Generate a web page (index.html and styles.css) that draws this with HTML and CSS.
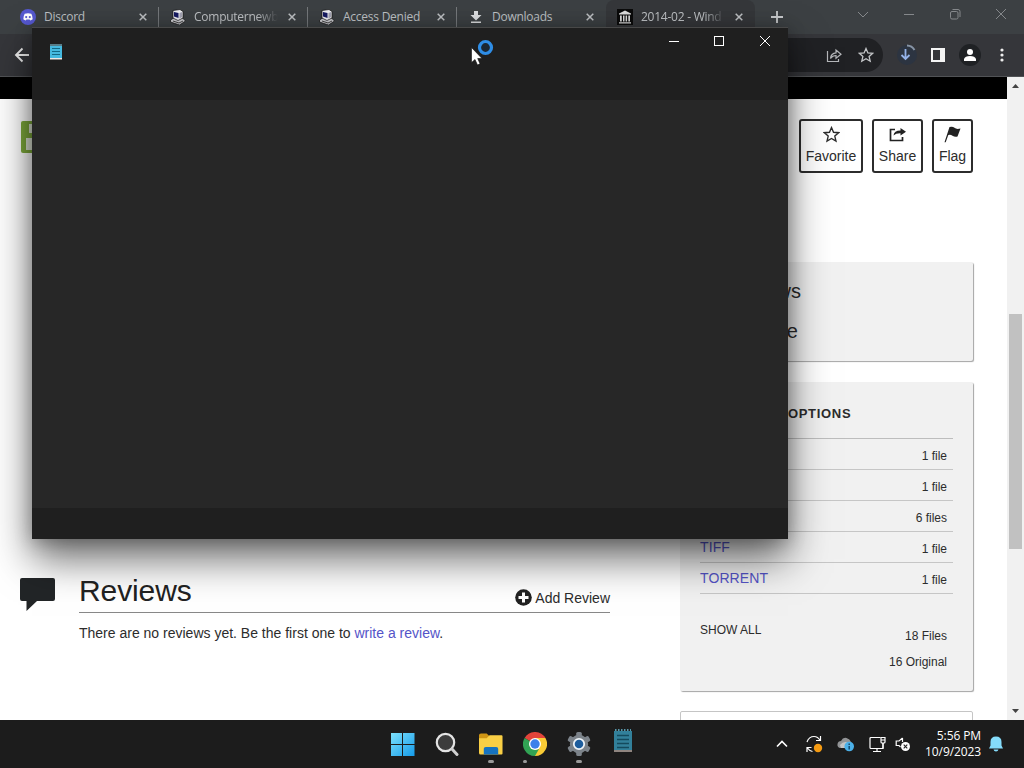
FILE: index.html
```html
<!DOCTYPE html>
<html lang="en">
<head>
    <meta charset="UTF-8">
    <meta name="viewport" content="width=device-width, initial-scale=1.0">
    <title>2014-02 - Windows</title>
    <link rel="stylesheet" href="styles.css">
</head>
<body>
    <!-- shared icons -->
    <svg width="0" height="0" class="defs">
        <symbol id="pc" viewBox="0 0 16 16">
            <path d="M.5 11l4-2.500 8 .5 3 3-6 4-9-3z" fill="#c9c9ce" stroke="#111" stroke-width=".7"/>
            <path d="M3 1.500L10 .5l3 2v6.500L8 11.500l-5-2.500z" fill="#eeeef2" stroke="#111" stroke-width=".7"/>
            <path d="M4 3l4.500 1v5L4 7.500z" fill="#171b62"/>
            <path d="M9.500 4l2.500-1v5l-2.500 1.500z" fill="#a4a4b4"/>
            <path d="M3 12l6 2 4-2" fill="none" stroke="#444" stroke-width="1"/>
        </symbol>
        <symbol id="x" viewBox="0 0 8 8"><path d="M.7.7l6.600 6.600M7.300.7L.7 7.300" stroke="currentColor" stroke-width="1.500"/></symbol>
        <symbol id="star" viewBox="0 0 16 16"><path d="M8 1.500l1.900 4.400 4.800.4-3.600 3.200 1.100 4.700L8 11.700l-4.200 2.500 1.100-4.700-3.600-3.200 4.800-.4z" fill="none" stroke="currentColor" stroke-width="1.300"/></symbol>
    </svg>

    <div class="tabs">
        <div class="tab">
            <svg class="favicon" viewBox="0 0 16 16"><circle cx="8" cy="8" r="8" fill="#5558cf"/><path d="M4.700 4.800Q8 3.700 11.300 4.800 12.800 7.500 12.700 10.300 11.500 11.400 10.200 11.400L9.600 10.600H6.400L5.800 11.400Q4.500 11.400 3.300 10.300 3.200 7.500 4.700 4.800z" fill="#fff"/><circle cx="6.200" cy="8.100" r="1.100" fill="#5558cf"/><circle cx="9.800" cy="8.100" r="1.100" fill="#5558cf"/></svg>
            <span class="title">Discord</span>
            <svg class="close"><use href="#x"/></svg>
        </div>
        <div class="tab">
            <svg class="favicon"><use href="#pc"/></svg>
            <span class="title fade">Computernewb</span>
            <svg class="close"><use href="#x"/></svg>
        </div>
        <div class="tab">
            <svg class="favicon"><use href="#pc"/></svg>
            <span class="title">Access Denied</span>
            <svg class="close"><use href="#x"/></svg>
        </div>
        <div class="tab no-line">
            <svg class="favicon" viewBox="0 0 16 16"><path d="M6 2h4v4h3.500L8 11.500 2.500 6H6zM3 12.500h10V14H3z" fill="#dcdee0"/></svg>
            <span class="title">Downloads</span>
            <svg class="close"><use href="#x"/></svg>
        </div>
        <div class="tab active">
            <svg class="favicon" viewBox="0 0 16 16"><path d="M0 0h16v16H0z" fill="#0b0b0b"/><path d="M2 4.500L8 1.500l6 3v1H2zM3 6.500h1.800v6H3zM6 6.500h1.500v6H6zM8.600 6.500h1.500v6H8.600zM11.300 6.500H13v6h-1.700zM2 13.200h12v1.300H2z" fill="#ddd"/></svg>
            <span class="title fade">2014-02 - Wind</span>
            <svg class="close"><use href="#x"/></svg>
        </div>
        <svg class="new-tab" viewBox="0 0 12 12"><path d="M6 0v12M0 6h12" stroke="#c8cacc" stroke-width="1.800"/></svg>
        <div class="chrome-controls">
            <svg width="12" height="12" viewBox="0 0 12 12"><path d="M1 4l5 5 5-5"/></svg>
            <svg width="12" height="12" viewBox="0 0 12 12"><path d="M1 6.500h10"/></svg>
            <svg width="12" height="12" viewBox="0 0 12 12"><rect x="1.500" y="3.500" width="7.500" height="7.500" rx="1.500"/><path d="M3.500 1.500H9q2 0 2 2V9"/></svg>
            <svg width="12" height="12" viewBox="0 0 12 12"><path d="M1 1l10 10M11 1L1 11"/></svg>
        </div>
    </div>

    <div class="toolbar">
        <svg class="back" width="16" height="16" viewBox="0 0 16 16"><path d="M15 8H2M8.500 1.500L2 8l6.500 6.500" fill="none" stroke="#eee" stroke-width="1.900"/></svg>
        <div class="omnibox">
            <svg width="16" height="16" viewBox="0 0 16 16"><path d="M1.500 4v10.500h11V12M4.500 11.500q.5-5.500 5.500-5.700V3l5 4.200-5 4V8.500q-3.500 0-5.500 3z" fill="none" stroke="#b5b7ba" stroke-width="1.200"/></svg>
            <svg class="bookmark" width="16" height="16"><use href="#star"/></svg>
        </div>
        <div class="tools">
            <svg width="22" height="22" viewBox="0 0 22 22"><circle cx="11" cy="11" r="10" fill="#2c3441"/><path d="M11 1.500a9 9 0 0 1 7.500 4.500" fill="none" stroke="#8794a5" stroke-width="2"/><path d="M9.500 5v10M5.500 11l4 4 4-4" fill="none" stroke="#94b2e8" stroke-width="1.800"/></svg>
            <svg width="14" height="14" viewBox="0 0 14 14"><path d="M0 0h14v14H0zM2 2v10h7V2z" fill="#f4f4f4" fill-rule="evenodd"/></svg>
            <svg width="22" height="22" viewBox="0 0 22 22"><circle cx="11" cy="11" r="11" fill="#1f2124"/><circle cx="11" cy="8" r="3" fill="#fff"/><path d="M5 17v-2q1-3 6-3t6 3v2z" fill="#fff"/></svg>
            <svg width="4" height="14" viewBox="0 0 4 14"><g fill="#eee"><circle cx="2" cy="2" r="1.600"/><circle cx="2" cy="7" r="1.600"/><circle cx="2" cy="12" r="1.600"/></g></svg>
        </div>
    </div>

    <div class="viewport">
        <div class="page">
            <div class="black-bar"></div>
            <div class="columns">
                <div class="main">
                    <svg class="floppy" width="34" height="32" viewBox="0 0 34 32"><path d="M2 0h32v32H2q-2 0-2-2V2Q0 0 2 0z" fill="#7eab3c"/><path d="M8 3h18v9H8zM5 17h24v12H5z" fill="#dfe5d5"/></svg>
                    <div class="reviews">
                        <svg class="bubble" width="35" height="33" viewBox="0 0 35 33"><path d="M2 0h31q2 0 2 2v19q0 2-2 2H17L6.500 33V23H2q-2 0-2-2V2Q0 0 2 0z" fill="#222527"/></svg>
                        <div class="reviews-body">
                            <div class="reviews-head">
                                <h2>Reviews</h2>
                                <a class="add-review">
                                    <svg width="17" height="17" viewBox="0 0 17 17"><circle cx="8.500" cy="8.500" r="8.300" fill="#222"/><path d="M8.500 3.500v10M3.500 8.500h10" stroke="#fff" stroke-width="3"/></svg>
                                    <span>Add Review</span>
                                </a>
                            </div>
                            <p>There are no reviews yet. Be the first one to <a class="link">write a review</a>.</p>
                        </div>
                    </div>
                </div>

                <div class="side">
                    <div class="actions">
                        <div class="action favorite">
                            <svg width="17" height="17"><use href="#star"/></svg>
                            <span>Favorite</span>
                        </div>
                        <div class="action share">
                            <svg width="17" height="17" viewBox="0 0 17 17"><path d="M6 3.500H1.500v11h12V11" fill="none" stroke="#222" stroke-width="1.700"/><path d="M4.500 9.500Q5 4.500 11.500 4.500V2L17 5.800 11.500 9.500V7.200Q7 7 4.500 9.500z" fill="#222"/></svg>
                            <span>Share</span>
                        </div>
                        <div class="action flag">
                            <svg width="17" height="17" viewBox="0 0 17 17"><path d="M5.500 1q3-1 5 .8t6 .7l-3 8q-3 .6-5-.8T4.300 9L1.700 16.300H.5z" fill="#222"/></svg>
                            <span>Flag</span>
                        </div>
                    </div>
                    <div class="box stats">
                        <div>31 Views</div>
                        <div>1 Favorite</div>
                    </div>
                    <div class="box downloads">
                        <h3>DOWNLOAD OPTIONS</h3>
                        <div class="row"><a class="link">ISO IMAGE</a><span>1 file</span></div>
                        <div class="row"><a class="link">JPEG</a><span>1 file</span></div>
                        <div class="row"><a class="link">PDF</a><span>6 files</span></div>
                        <div class="row"><a class="link">TIFF</a><span>1 file</span></div>
                        <div class="row"><a class="link">TORRENT</a><span>1 file</span></div>
                        <div class="show-all">
                            <span>SHOW ALL</span>
                            <div class="totals"><div>18 Files</div><div>16 Original</div></div>
                        </div>
                    </div>
                    <div class="box collections"></div>
                </div>
            </div>
        </div>
        <div class="scrollbar">
            <svg width="7" height="4" viewBox="0 0 7 4"><path d="M3.500 0L7 4H0z" fill="#444"/></svg>
            <div class="thumb"></div>
            <svg width="7" height="4" viewBox="0 0 7 4"><path d="M3.500 4L7 0H0z" fill="#444"/></svg>
        </div>
    </div>

    <div class="taskbar">
        <div class="apps">
            <svg width="24" height="24" viewBox="0 0 24 24"><defs><linearGradient id="win" x1="0" y1="0" x2="1" y2="1"><stop offset="0" stop-color="#7ce0fb"/><stop offset="1" stop-color="#159bea"/></linearGradient></defs><path d="M0 1h11v11H0zM12 1h11.500v11H12zM0 13h11v11H0zM12 13h11.500v11H12z" fill="url(#win)"/></svg>
            <svg width="24" height="24" viewBox="0 0 24 24"><circle cx="10.500" cy="10.500" r="8.700" fill="#3c3c3c" stroke="#e4e4e4" stroke-width="2.200"/><path d="M17 17l5 5.500" stroke="#d0d0d0" stroke-width="3" stroke-linecap="round"/></svg>
            <div class="app running">
                <svg width="24" height="24" viewBox="0 0 25 24"><path d="M0 3q0-2 2-2h6l3 3v4H0z" fill="#cf9514"/><path d="M0 6h8l3-3h12.500q1 0 1 1v18q0 1-1 1h-22Q0 23 0 21z" fill="#f9cf45"/><path d="M5 23v-6q0-2 2-2h11q2 0 2 2v6z" fill="#1673c0"/></svg>
            </div>
            <div class="app running chrome">
                <svg width="24" height="24" viewBox="0 0 24 24"><path d="M12 12L1.600 6A12 12 0 0 1 22.400 6z" fill="#e2443a"/><path d="M12 12L22.400 6A12 12 0 0 1 12 24z" fill="#f9cb35"/><path d="M12 12v12A12 12 0 0 1 1.600 6z" fill="#31a354"/><path d="M12 6h10.400L17 15z" fill="#f9cb35"/><path d="M12 6h10.400a12 12 0 0 0-1.500-2H8z" fill="#e2443a"/><path d="M7 15l5 3 4-1-4 7z" fill="#31a354"/><circle cx="12" cy="12" r="6" fill="#fff"/><circle cx="12" cy="12" r="4.700" fill="#3b80ea"/></svg>
            </div>
            <div class="app running">
                <svg width="24" height="24" viewBox="0 0 24 24"><g fill="#7c838a"><circle cx="12" cy="12" r="9.200"/><g id="cog"><rect x="9.200" y="0" width="5.600" height="24" rx="1.500"/></g><use href="#cog" transform="rotate(60 12 12)"/><use href="#cog" transform="rotate(120 12 12)"/></g><circle cx="12" cy="12" r="5.200" fill="#1d5d9d" stroke="#eef3f7" stroke-width="1.800"/></svg>
            </div>
            <svg class="pad" width="18" height="24" viewBox="0 0 18 24"><path d="M0 2h18v19H0z" fill="#32809a"/><path d="M0 21h18v2H0z" fill="#8f8580"/><path d="M1 1h16" stroke="#5997aa" stroke-width="2" stroke-dasharray="1.500 1.500"/><path d="M3 6.500h12M3 10.500h12M3 14.500h12M3 18.500h12" stroke="#144a5d" stroke-width="1.500"/></svg>
        </div>
        <div class="tray">
            <svg width="12" height="8" viewBox="0 0 12 8"><path d="M1 6.500L6 1.500l5 5" fill="none" stroke="#fff" stroke-width="1.600"/></svg>
            <svg width="18" height="18" viewBox="0 0 18 18"><path d="M2 7q2-5.500 7-5.500 4 0 6 4M15.500 1v4.500H11M2 17v-4.500h4.500M2.500 13q2 3 5 3.500" fill="none" stroke="#fff" stroke-width="1.200"/><circle cx="13" cy="13" r="4.200" fill="#f49a12"/></svg>
            <svg width="18" height="16" viewBox="0 0 18 16"><path d="M3 12q-3-1-2.500-4T4 5q2-4 5.500-3T14 6l2 6z" fill="#929496"/><path d="M3 9q4-5 9-2l-2 5H4z" fill="#c3c4c5"/><circle cx="12.200" cy="10.500" r="4.800" fill="#4bb0e8"/><path d="M12.200 7.500v1.500M12.200 10v3.500" stroke="#174c71" stroke-width="1.500"/></svg>
            <svg width="17" height="17" viewBox="0 0 17 17"><path d="M11.500 1.500H2q-1 0-1 1v9q0 1 1 1h12V7M8 12.500v3M4 15.500h8" fill="none" stroke="#fff" stroke-width="1.200"/><path d="M12 1.500h4V6q0 1-1 1h-2q-1 0-1-1zM14 7v5.500M12 4h4" fill="none" stroke="#fff" stroke-width="1.200"/></svg>
            <svg width="16" height="16" viewBox="0 0 16 16"><path d="M7.500 2L4 5H1.200v4.500H4l1.500 1.500M7.500 2v4" fill="none" stroke="#fff" stroke-width="1.200"/><circle cx="10.500" cy="10.500" r="4.500" fill="#fff"/><path d="M8.700 8.700l3.600 3.600M12.300 8.700l-3.600 3.600" stroke="#222" stroke-width="1.100"/></svg>
            <div class="clock"><div>5:56 PM</div><div>10/9/2023</div></div>
            <svg class="bell" width="14" height="16" viewBox="0 0 14 16"><path d="M0 12.500l1.500-3V6q0-5.500 5.500-5.500T12.500 6v3.500l1.500 3zM4.500 13.500h5q-.5 2-2.500 2t-2.500-2z" fill="#85dcfb"/></svg>
        </div>
    </div>

    <div class="notepad">
        <div class="notepad-top">
            <svg width="12" height="16" viewBox="0 0 12 16"><path d="M0 2h12v12H0z" fill="#45b9df"/><path d="M0 14h12v1.500H0z" fill="#eee6e2"/><path d="M.5 1h11" stroke="#91dcf2" stroke-width="2" stroke-dasharray="1 1"/><path d="M2 4.500h8M2 7.500h8M2 10.500h8" stroke="#146985" stroke-width="1"/></svg>
            <div class="notepad-controls">
                <svg width="10" height="10" viewBox="0 0 10 10"><path d="M0 5.500h10"/></svg>
                <svg width="10" height="10" viewBox="0 0 10 10"><rect x=".5" y=".5" width="9" height="9"/></svg>
                <svg width="10" height="10" viewBox="0 0 10 10"><path d="M0 0l10 10M10 0L0 10"/></svg>
            </div>
        </div>
        <div class="notepad-text"></div>
        <div class="notepad-status"></div>
    </div>

    <svg class="cursor" width="24" height="28" viewBox="0 0 24 28"><path d="M.5 8.500v15l3.500-3 2.500 5.500 2.500-1.200L6.700 19.500H11z" fill="#fff" stroke="#111" stroke-width=".6"/><circle cx="14.500" cy="8.500" r="6" fill="#1b2733" stroke="#2e8de6" stroke-width="3.200"/></svg>
</body>
</html>
```

FILE: styles.css
```css
* {
    box-sizing: border-box;
}
body {
    margin: 0;
    width: 1024px;
    height: 768px;
    overflow: hidden;
    display: flex;
    flex-direction: column;
    font-family: "Liberation Sans", Arial, sans-serif;
    color: #2c2c2c;
    background-color: #fff;
}
svg {
    display: block;
    flex: none;
}
.defs {
    position: absolute;
}
.link {
    color: #5454c8;
}

/* browser */
.tabs {
    height: 34px;
    flex: none;
    display: flex;
    background-color: #3c4043;
    font-family: "Open Sans", "Noto Sans", sans-serif;
    font-size: 12px;
    color: #bfc2c5;
}
.tab {
    width: 149px;
    height: 34px;
    display: flex;
    align-items: center;
    padding: 0 11px 0 11px;
    position: relative;
}
.tab:first-child {
    width: 159px;
    padding-left: 20px;
}
.tab::after {
    content: "";
    position: absolute;
    right: 0;
    top: 7px;
    width: 1px;
    height: 20px;
    background-color: #75787b;
}
.tab.no-line::after,
.tab.active::after {
    display: none;
}
.tab.active {
    background-color: #35373a;
    border-radius: 8px 8px 0 0;
}
.favicon {
    width: 16px;
    height: 16px;
}
.title {
    flex: 1;
    margin: -1px 10px 0 8px;
    white-space: nowrap;
    letter-spacing: -0.25px;
}
.title.fade {
    -webkit-mask-image: linear-gradient(to right, #000 75%, transparent);
    mask-image: linear-gradient(to right, #000 75%, transparent);
}
.close {
    width: 8px;
    height: 8px;
    margin-right: 1px;
}
.new-tab {
    width: 12px;
    height: 12px;
    margin: 11px 0 0 16px;
}
.chrome-controls {
    margin: 8px 17px 0 auto;
    display: flex;
    gap: 34px;
}
.chrome-controls svg {
    fill: none;
    stroke: #85888b;
    stroke-width: 1;
}
.toolbar {
    height: 43px;
    flex: none;
    display: flex;
    align-items: center;
    padding: 0 20px 0 14px;
    background-color: #35363a;
    border-bottom: 1px solid #515356;
}
.omnibox {
    width: 769px;
    height: 34px;
    margin-left: 84px;
    border-radius: 17px;
    background-color: #202124;
    display: flex;
    align-items: center;
    justify-content: flex-end;
    gap: 16px;
    padding-right: 9px;
}
.bookmark {
    color: #c4c6c8;
}
.tools {
    display: flex;
    align-items: center;
    margin-left: auto;
    gap: 13px;
}
.tools svg:nth-child(3) {
    margin-left: 1px;
    margin-right: 6px;
}

/* page */
.viewport {
    height: 643px;
    flex: none;
    display: flex;
}
.page {
    flex: 1;
    overflow: hidden;
}
.black-bar {
    height: 22px;
    background-color: #000;
}
.columns {
    display: flex;
    justify-content: space-between;
    padding: 20px 33px 0 21px;
}
.main {
    width: 589px;
}
.floppy {
    margin-top: 2px;
}
.reviews {
    display: flex;
    margin-top: 421px;
}
.bubble {
    margin: 4px 0 0 -1px;
}
.reviews-body {
    flex: 1;
    margin-left: 24px;
}
.reviews-head {
    display: flex;
    justify-content: space-between;
    height: 39px;
    border-bottom: 1px solid #888;
}
.reviews h2 {
    margin: 0;
    font-size: 30px;
    font-weight: normal;
    line-height: 34px;
    letter-spacing: -0.1px;
    color: #222;
}
.add-review {
    display: flex;
    align-items: center;
    gap: 3px;
    height: 17px;
    margin-top: 14px;
    font-size: 14px;
}
.add-review svg {
    margin-top: 1px;
}
.add-review span {
    padding-top: 3px;
}
.reviews p {
    margin: 11px 0 0;
    font-size: 14px;
    line-height: 18px;
}
.side {
    width: 294px;
}
.actions {
    display: flex;
    justify-content: flex-end;
    gap: 9px;
    padding-right: 1px;
}
.action {
    height: 54px;
    border: 2px solid #2c2c2c;
    border-radius: 3px;
    display: flex;
    flex-direction: column;
    align-items: center;
    padding-top: 5px;
    font-size: 14px;
}
.action span {
    margin-top: 5px;
    line-height: 16px;
}
.favorite {
    width: 64px;
}
.share {
    width: 51px;
}
.flag {
    width: 41px;
}
.box {
    background-color: #f1f1f1;
    border-radius: 2px;
    box-shadow: 1px 1px 1px #a5a5a5;
    width: 293px;
}
.stats {
    height: 99px;
    margin-top: 89px;
    padding: 9px 0;
    font-size: 20px;
    line-height: 40px;
    text-align: right;
}
.stats div {
    padding-right: 172px;
}
.stats div:last-child {
    padding-right: 175px;
}
.downloads {
    height: 309px;
    margin-top: 21px;
    padding: 24px 20px 0;
    font-size: 12px;
}
.downloads h3 {
    margin: 0;
    height: 33px;
    line-height: 16px;
    font-size: 13px;
    letter-spacing: 0.7px;
    white-space: nowrap;
    border-bottom: 1px solid #bdbdbd;
}
.row {
    height: 31px;
    display: flex;
    justify-content: space-between;
    padding: 6px 6px 0 0;
    line-height: 18px;
    border-bottom: 1px solid #c6c6c6;
}
.row a {
    font-size: 14px;
    letter-spacing: 0.1px;
}
.row span {
    padding-top: 2px;
}
.show-all {
    display: flex;
    justify-content: space-between;
    padding: 29px 6px 0 0;
    line-height: 14px;
}
.totals {
    text-align: right;
    line-height: 26px;
}
.collections {
    height: 60px;
    margin-top: 20px;
    background-color: #fff;
    border: 1px solid #c5c5c5;
    box-shadow: none;
}
.scrollbar {
    width: 17px;
    background-color: #f1f1f1;
    display: flex;
    flex-direction: column;
    align-items: center;
    padding-top: 7px;
}
.thumb {
    width: 13px;
    height: 235px;
    margin: 226px 0 160px;
    background-color: #c1c1c1;
}

/* taskbar */
.taskbar {
    height: 48px;
    flex: none;
    display: flex;
    justify-content: space-between;
    background-color: #1c1c1c;
    padding: 0 21px 0 391px;
}
.apps {
    display: flex;
    gap: 20px;
    padding-top: 12px;
}
.app {
    position: relative;
    width: 24px;
    height: 24px;
}
.running::after {
    content: "";
    position: absolute;
    left: 9px;
    bottom: -7px;
    width: 6px;
    height: 3px;
    border-radius: 2px;
    background-color: #9a9a9a;
}
.chrome::after {
    left: 0;
    width: 4px;
}
.pad {
    margin: -3px 0 0 3px;
}
.tray {
    display: flex;
    align-items: center;
    font-family: "Open Sans", "Noto Sans", sans-serif;
    font-size: 12px;
    letter-spacing: -0.1px;
    color: #fff;
}
.tray svg {
    margin-right: 14px;
}
.tray svg:first-child {
    margin-right: 17px;
}
.tray svg:nth-child(4) {
    margin-right: 9px;
}
.clock {
    text-align: right;
    line-height: 16px;
    margin-right: 8px;
}
.tray .bell {
    margin-right: 0;
}

/* notepad window over the browser */
.notepad {
    position: absolute;
    left: 32px;
    top: 27px;
    width: 756px;
    height: 512px;
    display: flex;
    flex-direction: column;
    background-color: #272727;
    border-top: 1px solid #484848;
    box-shadow: 0 20px 38px rgba(0, 0, 0, 0.58), 0 2px 16px rgba(0, 0, 0, 0.25);
}
.notepad-top {
    height: 72px;
    display: flex;
    justify-content: space-between;
    padding: 16px 18px 0;
    background-color: #1f1f1f;
}
.notepad-controls {
    display: flex;
    gap: 36px;
    margin-top: -8px;
}
.notepad-controls svg {
    fill: none;
    stroke: #fff;
    stroke-width: 1;
}
.notepad-controls svg:first-child {
    margin-right: -1px;
}
.notepad-text {
    flex: 1;
}
.notepad-status {
    height: 31px;
    background-color: #1f1f1f;
}
.cursor {
    position: absolute;
    left: 471px;
    top: 39px;
}
```
